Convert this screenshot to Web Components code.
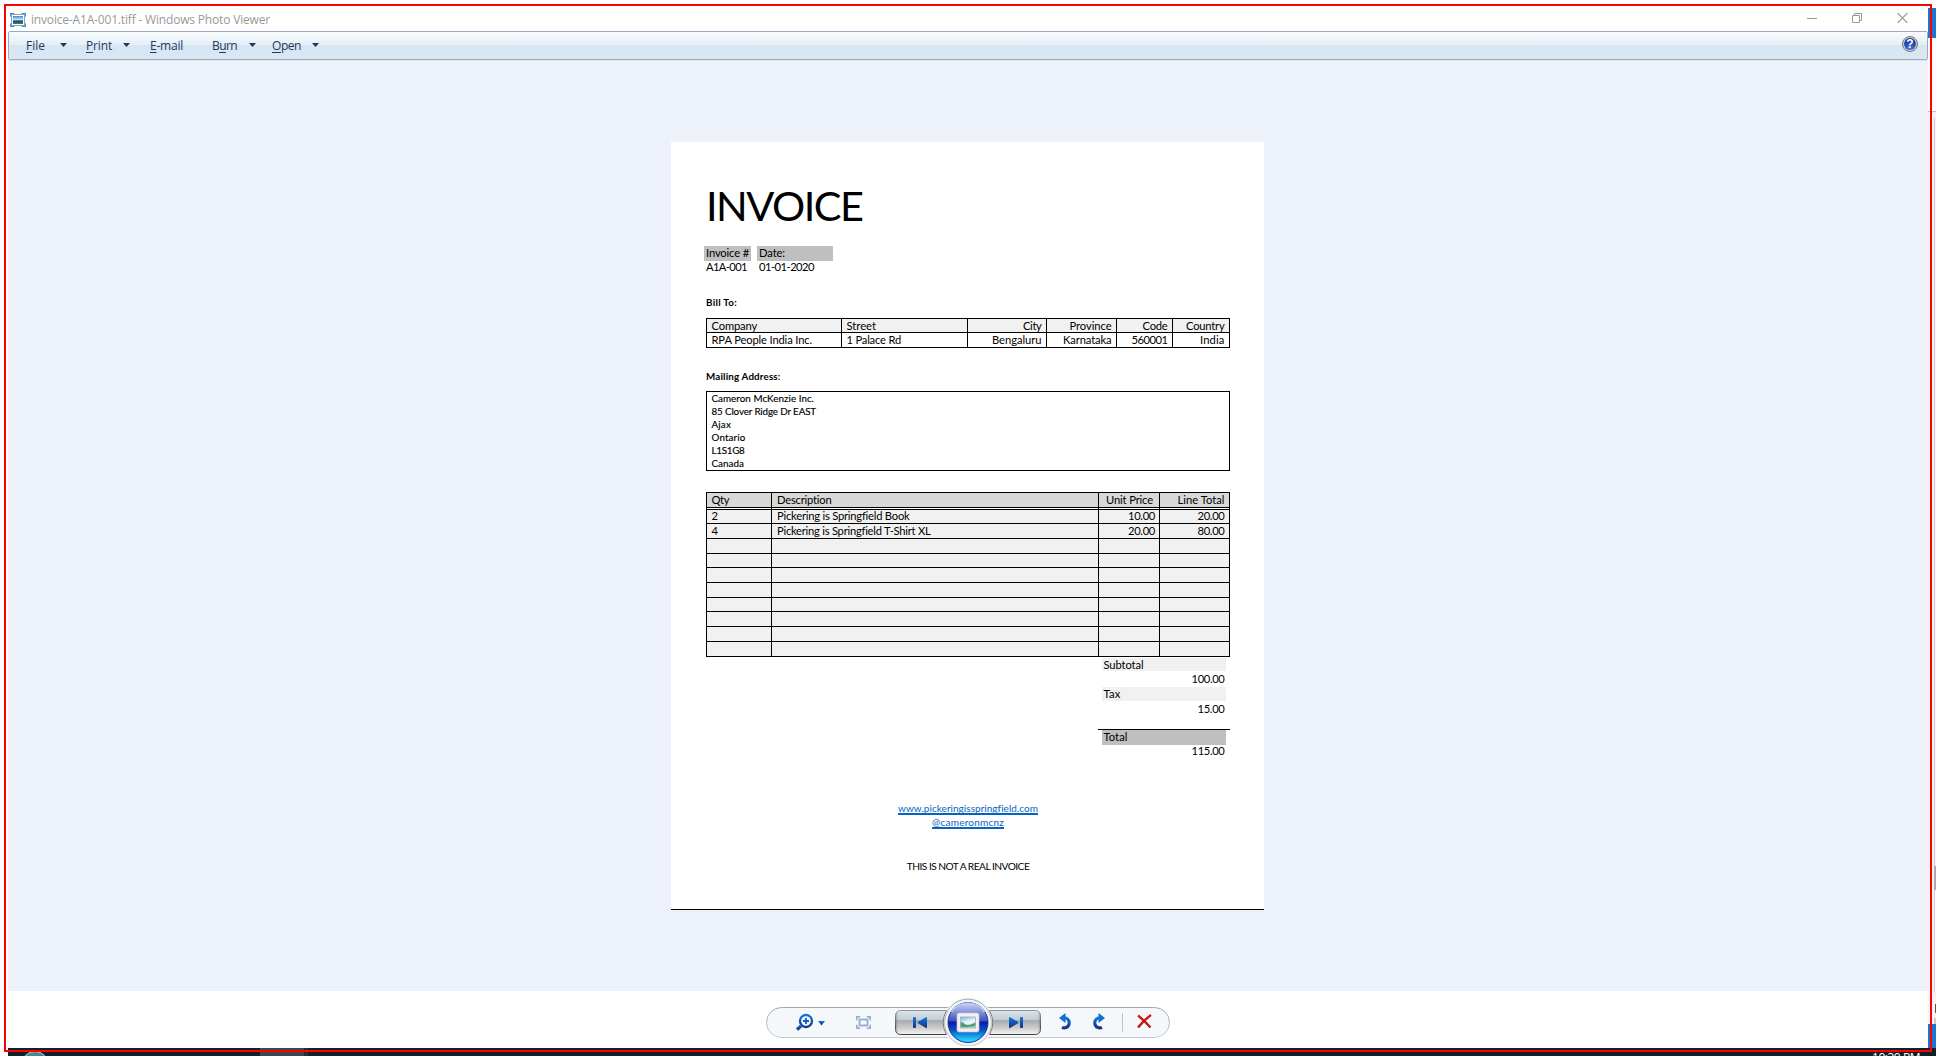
<!DOCTYPE html>
<html lang="en">
<head>
<meta charset="utf-8">
<title>invoice-A1A-001.tiff - Windows Photo Viewer</title>
<style>
html,body{margin:0;padding:0;width:1936px;height:1056px;overflow:hidden;background:#fff}
</style>
</head>
<body>
<photo-desktop></photo-desktop>
<script>
class BaseEl extends HTMLElement{
  constructor(){super();this.attachShadow({mode:'open'}).innerHTML=this.constructor.html;}
}
const def=(name,html)=>customElements.define(name,class extends BaseEl{static get html(){return html}});

/* One line of text, tracked so that it is exactly `w` pixels wide. */
customElements.define('fit-text',class extends BaseEl{
  static get html(){return `<style>:host{display:inline-block;white-space:nowrap;flex:none}span{display:inline-block}</style><span><slot></slot></span>`}
  connectedCallback(){
    const w=+this.getAttribute('w'),s=this.shadowRoot.querySelector('span'),n=this.textContent.length;
    if(!w)return;
    this.style.letterSpacing=((w-s.getBoundingClientRect().width)/n)+'px';
    this.style.width=w+'px';
  }
});

/* ---------- window chrome ---------- */
def('title-bar',`<style>
:host{display:flex;height:23px;align-items:center;background:#fff;color:#999;font:12px/16px "Open Sans",sans-serif}
.ico{margin:1px 5px 0 2px}.sp{flex:1}.c{display:flex;gap:35px;margin:-3px 20px 0 0}.c svg{display:block}
fit-text{margin-top:0}
</style>
<svg class="ico" width="16" height="14" viewBox="0 0 16 14"><defs><linearGradient id="g" x2="0" y2="1"><stop stop-color="#3f86d4"/><stop offset=".5" stop-color="#d5ecf8"/><stop offset=".6" stop-color="#1c4a3c"/><stop offset="1" stop-color="#2e7fa0"/></linearGradient></defs>
<path d="M0 0h5L0 4zM16 0h-5l5 4zM0 14h5l-5-4zM16 14h-5l5-4z" fill="#3b8fd0"/><rect x="1.500" y="1.500" width="13" height="11" fill="#fff" stroke="#8fa3b5"/><rect x="3" y="3" width="10" height="8" fill="url(#g)"/></svg>
<fit-text w="239">invoice-A1A-001.tiff - Windows Photo Viewer</fit-text><div class="sp"></div>
<div class="c"><svg width="10" height="10"><path d="M0 5.500h10" stroke="#999"/></svg>
<svg width="10" height="10"><path d="M.5 2.500h7v7h-7zM2.500 2.500v-2h7v7h-2" fill="none" stroke="#999"/></svg>
<svg width="11" height="10"><path d="M.5 0l10 10M10.500 0L.5 10" stroke="#999" stroke-width="1.100"/></svg></div>`);

def('menu-item',`<style>
:host{display:flex;align-items:center;flex:none}
:host svg{display:none;margin-top:-1px}:host([drop]) svg{display:block;margin-left:auto}
</style><slot></slot><svg width="7" height="4"><path d="M0 0h7L3.500 4z" fill="#1e395b"/></svg>`);

def('menu-bar',`<style>
:host{display:flex;height:29px;box-sizing:border-box;border:1px solid #9babbf;border-radius:2px;background:linear-gradient(#f9fcfe,#e4eef6 13px,#d8e5f2 13px,#d9e6f3);color:#1e395b;font:12px/16px "Open Sans",sans-serif;align-items:center;padding:0 9px 0 17px}
fit-text{margin-top:1px}u{text-decoration-thickness:1px;text-underline-offset:2px}
.h{margin:-3px 0 0 auto;display:block}
.q{font:bold 12px/1 "Liberation Sans",sans-serif;fill:#fff}
</style>
<menu-item drop style="width:41px"><fit-text w="19"><u>F</u>ile</fit-text></menu-item>
<menu-item drop style="width:44px;margin-left:19px"><fit-text w="26"><u>P</u>rint</fit-text></menu-item>
<menu-item style="margin-left:20px"><fit-text w="33"><u>E</u>-mail</fit-text></menu-item>
<menu-item drop style="width:44px;margin-left:29px"><fit-text w="25">B<u>u</u>rn</fit-text></menu-item>
<menu-item drop style="width:47px;margin-left:16px"><fit-text w="29"><u>O</u>pen</fit-text></menu-item>
<svg class="h" width="16" height="16" viewBox="0 0 16 16"><defs><radialGradient id="b" cx=".5" cy=".9" r=".8"><stop stop-color="#3d7fe0"/><stop offset="1" stop-color="#142f98"/></radialGradient></defs><circle cx="8" cy="8" r="7.500" fill="#c9ccd2" stroke="#77797f"/><circle cx="8" cy="8" r="5.900" fill="url(#b)"/><text class="q" x="8" y="12.200" text-anchor="middle">?</text></svg>`);

/* ---------- invoice ---------- */
/* A ruled row: `cols` sets the column widths, `h` the row height, children are the cells. */
customElements.define('ruled-row',class extends BaseEl{
  static get html(){return `<style>
:host{display:grid;box-sizing:border-box;border-top:1px solid #000;border-right:1px solid #000;background:#fff;line-height:13px}
::slotted(*){display:flex;min-width:0;box-sizing:border-box;border-left:1px solid #000;padding:0 4.500px}
::slotted(.r){justify-content:flex-end}
</style><slot></slot>`}
  connectedCallback(){
    this.style.gridTemplateColumns=this.getAttribute('cols');
    this.style.height=this.getAttribute('h')+'px';
  }
});

def('invoice-meta',`<style>
:host{display:flex;gap:6px;margin:16px 0 0 -2px}
.l{background:#bfbfbf;height:15px;line-height:13px;padding-left:2px;box-sizing:border-box}
.v{height:15px;line-height:11px;padding-left:2px}
</style>
<div><div class="l" style="width:47px"><fit-text w="43">Invoice #</fit-text></div><div class="v"><fit-text w="41">A1A-001</fit-text></div></div>
<div><div class="l" style="width:76px"><fit-text w="26">Date:</fit-text></div><div class="v"><fit-text w="55">01-01-2020</fit-text></div></div>`);

const C1='135px 126px 79px 70px 56px 57px';
def('bill-to',`<style>
:host{display:block;margin-top:19px}.h{font:bold 9.800px/14px Lato,sans-serif;height:14px;margin-bottom:9px}
.t{border-bottom:1px solid #000;width:524px}
</style><div class="h"><fit-text w="31">Bill To:</fit-text></div>
<div class="t">
<ruled-row cols="${C1}" h="14" style="background:#f1f1f1"><div><fit-text w="45.500">Company</fit-text></div><div><fit-text w="29.500">Street</fit-text></div><div class="r"><fit-text w="18.500">City</fit-text></div><div class="r"><fit-text w="42">Province</fit-text></div><div class="r"><fit-text w="25">Code</fit-text></div><div class="r"><fit-text w="38.500">Country</fit-text></div></ruled-row>
<ruled-row cols="${C1}" h="15"><div><fit-text w="100.500">RPA People India Inc.</fit-text></div><div><fit-text w="54.500">1 Palace Rd</fit-text></div><div class="r"><fit-text w="49.500">Bengaluru</fit-text></div><div class="r"><fit-text w="48.500">Karnataka</fit-text></div><div class="r"><fit-text w="36">560001</fit-text></div><div class="r"><fit-text w="24.500">India</fit-text></div></ruled-row>
</div>`);

def('mailing-address',`<style>
:host{display:block;margin-top:21px;font-size:9.800px}.h{font-weight:bold;line-height:14px;height:14px;margin-bottom:8px}
.b{box-sizing:border-box;width:524px;height:80px;border:1px solid #000;padding-left:4.500px;line-height:13px;display:flex;flex-direction:column;align-items:flex-start;-webkit-text-stroke:.15px #000}
</style><div class="h"><fit-text w="74.500">Mailing Address:</fit-text></div>
<div class="b"><fit-text w="102.500">Cameron McKenzie Inc.</fit-text><fit-text w="104.500">85 Clover Ridge Dr EAST</fit-text><fit-text w="19.500">Ajax</fit-text><fit-text w="34">Ontario</fit-text><fit-text w="33">L1S1G8</fit-text><fit-text w="32.500">Canada</fit-text></div>`);

const C2='65px 327px 61px 70px';
const empty=[15,14,15,15,14,15,15,15].map(h=>`<ruled-row class="i" cols="${C2}" h="${h}"><div></div><div></div><div></div><div></div></ruled-row>`).join('');
def('item-table',`<style>
:host{display:block;margin-top:21px;width:524px;border-bottom:1px solid #000}.i{background:#f1f1f1}
</style>
<ruled-row cols="${C2}" h="15" style="background:#d8d8d8"><div><fit-text w="17.500">Qty</fit-text></div><div style="padding-left:5px"><fit-text w="54.500">Description</fit-text></div><div class="r" style="padding-right:6px"><fit-text w="47">Unit Price</fit-text></div><div class="r"><fit-text w="47">Line Total</fit-text></div></ruled-row>
<ruled-row cols="${C2}" h="2"><div></div><div></div><div></div><div></div></ruled-row>
<ruled-row class="i" cols="${C2}" h="14" style="line-height:11px"><div><fit-text w="6.500">2</fit-text></div><div style="padding-left:5px"><fit-text w="132.500">Pickering is Springfield Book</fit-text></div><div class="r" style="padding-right:4px"><fit-text w="27">10.00</fit-text></div><div class="r"><fit-text w="27">20.00</fit-text></div></ruled-row>
<ruled-row class="i" cols="${C2}" h="15"><div><fit-text w="6.500">4</fit-text></div><div style="padding-left:5px"><fit-text w="153.500">Pickering is Springfield T-Shirt XL</fit-text></div><div class="r" style="padding-right:4px"><fit-text w="27">20.00</fit-text></div><div class="r"><fit-text w="27">80.00</fit-text></div></ruled-row>
${empty}`);

def('invoice-totals',`<style>
:host{display:block;width:132px;margin-left:392px;padding-top:1px;line-height:13px}
.l{margin:0 4px;padding-left:1.500px;background:#f1f1f1;box-sizing:border-box}
.v{display:flex;justify-content:flex-end;padding-right:5.500px;line-height:15px}
.t{border-top:1px solid #000}
</style>
<div class="l" style="height:13px"><fit-text w="40">Subtotal</fit-text></div><div class="v" style="height:16px"><fit-text w="33">100.00</fit-text></div>
<div class="l" style="height:14px"><fit-text w="17">Tax</fit-text></div><div class="v" style="height:28px"><fit-text w="27">15.00</fit-text></div>
<div class="t"><div class="l" style="height:15px;background:#bfbfbf"><fit-text w="24">Total</fit-text></div><div class="v" style="height:16px;line-height:11px"><fit-text w="33">115.00</fit-text></div></div>`);

def('invoice-footer',`<style>
:host{display:flex;flex-direction:column;align-items:center;width:524px;margin-top:41px;font-size:10px}
a{display:block;height:13px;line-height:12px;box-sizing:border-box;border-bottom:2px solid #0563c1;color:#0563c1;margin-bottom:1px}
p{margin:29px 0 0;line-height:14px;font-size:10.200px}
</style><a><fit-text w="140">www.pickeringisspringfield.com</fit-text></a><a><fit-text w="72">@cameronmcnz</fit-text></a>
<p><fit-text w="122.500">THIS IS NOT A REAL INVOICE</fit-text></p>`);

def('invoice-page',`<style>
:host{display:block;box-sizing:border-box;width:593px;height:768px;background:#fff;border-bottom:1px solid #000;padding:38px 0 0 35px;color:#000;font:11.200px/13px Lato,sans-serif;font-variant-ligatures:none}
.t{font-size:41.500px;line-height:50px;height:50px}
</style><div class="t"><fit-text w="156.500">INVOICE</fit-text></div>
<invoice-meta></invoice-meta><bill-to></bill-to><mailing-address></mailing-address><item-table></item-table><invoice-totals></invoice-totals><invoice-footer></invoice-footer>`);

/* ---------- playback controls ---------- */
def('viewer-controls',`<style>
:host{display:flex;justify-content:center;height:57px;background:#fff;width:1920px}
svg{display:block;margin-top:5px}
</style>
<svg width="406" height="50" viewBox="765 996 406 50">
<defs>
<linearGradient id="pb" x2="0" y2="1"><stop stop-color="#a4a6a9"/><stop offset="1" stop-color="#c9cacd"/></linearGradient>
<linearGradient id="nb" x2="0" y2="1"><stop stop-color="#dce5eb"/><stop offset=".38" stop-color="#c3cdd3"/><stop offset=".42" stop-color="#a7abae"/><stop offset=".7" stop-color="#c9c9c9"/><stop offset="1" stop-color="#f5f5f5"/></linearGradient>
<linearGradient id="ns" x2="0" y2="1"><stop stop-color="#8e9399"/><stop offset="1" stop-color="#3d3f42"/></linearGradient>
<linearGradient id="bl" x2="0" y2="1"><stop stop-color="#0a7ae0"/><stop offset="1" stop-color="#1d2f86"/></linearGradient>
<linearGradient id="rd" x2="0" y2="1"><stop stop-color="#e0141c"/><stop offset="1" stop-color="#a32018"/></linearGradient>
<linearGradient id="c" x2="0" y2="1"><stop stop-color="#cfd6f4"/><stop offset=".2" stop-color="#8f9fe2"/><stop offset=".46" stop-color="#3a50bd"/><stop offset=".49" stop-color="#071a9c"/><stop offset=".7" stop-color="#0a54c8"/><stop offset=".92" stop-color="#1fc8f8"/><stop offset="1" stop-color="#3de0ff"/></linearGradient>
<linearGradient id="pic" x2=".4" y2="1"><stop stop-color="#6fb9ea"/><stop offset=".6" stop-color="#eefafb"/><stop offset="1" stop-color="#a9dce4"/></linearGradient>
</defs>
<rect x="766.500" y="1007.500" width="403" height="30" rx="15" fill="#f4f8fb" stroke="url(#pb)"/>
<rect x="895.500" y="1010.500" width="145" height="24" rx="5" fill="url(#nb)" stroke="url(#ns)"/>
<path d="M897 1013q-1 10 0 19M1039 1013q1 10 0 19" fill="none" stroke="#777" stroke-opacity=".5"/>
<circle cx="968" cy="1022.500" r="25" fill="#f4f8fb"/>
<path d="M946.500 1010.500a25 25 0 0 0 0 24M989.500 1010.500a25 25 0 0 1 0 24" fill="none" stroke="#707377"/>
<circle cx="968" cy="1022.500" r="23.400" fill="#f1f4f8" stroke="url(#pb)"/>
<circle cx="968" cy="1022.500" r="20" fill="url(#c)" stroke="#1b2c9a"/>
<path d="M951.500 1012a19.500 19.500 0 0 1 33 0" fill="none" stroke="#b9c4ef" stroke-width="1.500"/>
<rect x="957" y="1013" width="22" height="19" rx="2" fill="#f3f0f3" stroke="#c7c5d4" stroke-width=".7"/><rect x="960.500" y="1017" width="15" height="11" fill="url(#pic)"/><path d="M960.500 1022q3 0 5 2.500 4 1.500 10-2v3.500q-7 1.500-15 1z" fill="#4f9c72"/><rect x="960.500" y="1017" width="15" height="11" fill="none" stroke="#a8a8aa" stroke-width=".8"/>
<g fill="url(#bl)"><rect x="913" y="1017" width="3" height="11" rx="1"/><path d="M926 1017.200q1-.5 1 .5v10q0 .8-1 .3l-8-4.700q-1-.8 0-1.500z"/>
<rect x="1020" y="1017" width="3" height="11" rx="1"/><path d="M1010 1017.200q-1-.5-1 .5v10q0 .8 1 .3l8-4.700q1-.8 0-1.500z"/>
<path d="M818 1021h7l-3.500 4.500z"/></g>
<g fill="none" stroke="url(#bl)"><circle cx="806" cy="1021" r="6" stroke-width="2.300"/><path d="M801.500 1025.500l-4.500 4" stroke-width="3.200"/><path d="M803 1021h6.010M806 1018v6.010" stroke="#1456b8" stroke-width="1.800"/></g>
<g stroke="#9bb1cb" fill="none"><rect x="859.500" y="1019.500" width="8" height="6" stroke-width="2"/></g>
<path d="M856 1016h5l-1.500 1.500-1.500.5-.5 1.500-1.500 1.500zM871 1016h-5l1.500 1.500 1.500.5.5 1.500 1.500 1.500zM856 1029h5l-1.500-1.500-1.500-.5-.5-1.500-1.500-1.500zM871 1029h-5l1.500-1.500 1.500-.5.5-1.500 1.500-1.500z" fill="#9bb1cb"/>
<path d="M1063 1018h2.500a5 5 0 1 1-3.500 9.300" fill="none" stroke="url(#bl)" stroke-width="3.200"/><path d="M1059 1018l6.500-5v10z" fill="#0c70d4"/>
<path d="M1101 1018h-2.500a5 5 0 1 0 3.500 9.300" fill="none" stroke="url(#bl)" stroke-width="3.200"/><path d="M1105 1018l-6.500-5v10z" fill="#0c70d4"/>
<path d="M1122.500 1013v18.500" stroke="#bfc1c5"/>
<path d="M1138 1015.500q7 5.500 12.500 12M1151 1015q-7 5-13 12.500" fill="none" stroke="url(#rd)" stroke-width="2.300"/>
</svg>`);

/* ---------- the desktop behind and round the window ---------- */
def('photo-window',`<style>
:host{display:flex;flex-direction:column;width:1920px;height:1040px;background:#fff}
.canvas{height:931px;background:#edf1fa;display:flex;justify-content:center;align-items:flex-start;padding:82px 1px 0 0;box-sizing:border-box;box-shadow:inset 0 1px #dce7f1}
</style><title-bar></title-bar><menu-bar></menu-bar><div class="canvas"><invoice-page></invoice-page></div><viewer-controls></viewer-controls>`);

def('desktop-edge',`<style>
:host{display:flex;flex-direction:column;width:8px;height:1040px;background:#fafafa}
.b{background:#1c76d2;flex:none}.m{flex:1;display:flex;flex-direction:column;align-items:flex-end;background:#f3f3f3}
.w{height:73px;align-self:stretch;background:#fafafa;border-bottom:1px solid #bdbdbd;flex:none}
.m i{display:block;width:2px;flex:none}
</style><div class="b" style="height:30px"></div>
<div class="m"><div class="w"></div><i style="height:6px"></i><i style="height:748px;background:linear-gradient(90deg,#ccc 50%,#f3f3f3 50%)"></i><i style="height:24px;background:#a9a9a9"></i><i style="height:103px;background:linear-gradient(90deg,#ccc 50%,#fff 50%)"></i><i style="height:11px"></i><i style="height:9px;width:1px;background:#744"></i><i style="height:5px"></i><i style="height:6px;background:#ccc"></i></div>
<div class="b" style="height:24px"></div>`);

def('task-bar',`<style>
:host{display:flex;height:8px;margin-left:8px;background:#10212a;overflow:hidden}
.o{width:28px;height:28px;border-radius:50%;box-sizing:border-box;border:1px solid #b7cbd0;background:#4e8592;margin:3px 0 0 13px;flex:none}
.a{width:44px;background:#3c484d;margin-left:211px;border-right:1px solid #1b282e}.n{width:3px;background:#26343a}
.k{margin:2px 16px 0 auto;color:#fff;font:12px/16px "Open Sans",sans-serif}
</style><div class="o"></div><div class="a"></div><div class="n"></div><div class="k"><fit-text w="48">10:39 PM</fit-text></div>`);

def('photo-desktop',`<style>
:host{display:block;position:relative;width:1936px;height:1056px;overflow:hidden}
.r{display:flex;height:1040px;padding:8px 0 0 8px}
.f{position:absolute;left:4px;top:4px;width:1928px;height:1048px;box-sizing:border-box;border:2px solid #f00;pointer-events:none}
</style><div class="r"><photo-window></photo-window><desktop-edge></desktop-edge></div><task-bar></task-bar><div class="f"></div>`);
</script>
</body>
</html>
